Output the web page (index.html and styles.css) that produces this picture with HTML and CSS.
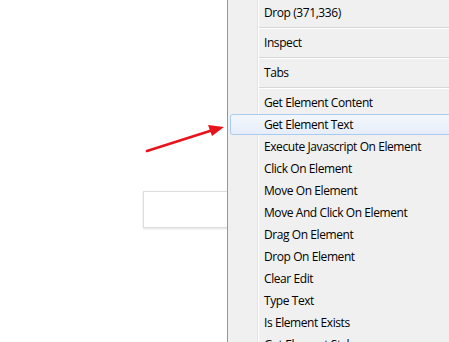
FILE: index.html
```html
<!DOCTYPE html>
<html>
<head>
<meta charset="utf-8">
<link rel="stylesheet" href="styles.css">
</head>
<body>
<div class="page">
  <div class="input-box"></div>
  <svg class="arrow" width="90" height="40" viewBox="0 0 90 40">
    <line x1="2" y1="35" x2="68" y2="14" stroke="#e8141c" stroke-width="2.6" stroke-linecap="round"/>
    <polygon points="79,11 63,9 67,20" fill="#e8141c"/>
  </svg>
  <div class="menu">
    <div class="item">Drop (371,336)</div>
    <div class="sep"></div>
    <div class="item">Inspect</div>
    <div class="sep"></div>
    <div class="item">Tabs</div>
    <div class="sep"></div>
    <div class="item">Get Element Content</div>
    <div class="item active">Get Element Text</div>
    <div class="item">Execute Javascript On Element</div>
    <div class="item">Click On Element</div>
    <div class="item">Move On Element</div>
    <div class="item">Move And Click On Element</div>
    <div class="item">Drag On Element</div>
    <div class="item">Drop On Element</div>
    <div class="item">Clear Edit</div>
    <div class="item">Type Text</div>
    <div class="item">Is Element Exists</div>
    <div class="item">Get Element Style</div>
  </div>
</div>
</body>
</html>
```

FILE: styles.css
```css
html, body {
  margin: 0;
  padding: 0;
  background: #fff;
  overflow: hidden;
}
.page {
  position: relative;
  width: 449px;
  height: 342px;
  overflow: hidden;
}
.input-box {
  position: absolute;
  left: 143px;
  top: 191px;
  width: 120px;
  height: 35px;
  border: 1px solid #dedede;
  background: #fff;
  box-shadow: 0 1px 2px rgba(0,0,0,0.12);
}
.arrow {
  position: absolute;
  left: 145px;
  top: 116px;
}
.menu {
  position: absolute;
  left: 227px;
  top: 0;
  width: 240px;
  height: 380px;
  background: #f0f0f0;
  border-left: 1px solid #979797;
  padding-top: 2px;
  font-family: "Open Sans", "Liberation Sans", sans-serif;
  font-size: 12px;
  color: #000;
  box-sizing: border-box;
  background-image: linear-gradient(to right, transparent 29px, #e2e3e3 29px, #e2e3e3 30px, #fff 30px, #fff 31px, transparent 31px);
}
.item {
  height: 22px;
  line-height: 22px;
  padding-left: 34px;
  margin-left: 2px;
  letter-spacing: -0.42px;
  white-space: nowrap;
  box-sizing: border-box;
}
.item.active {
  height: 21px;
  margin-bottom: 1px;
  line-height: 20px;
  padding-left: 33px;
  border: 1px solid #a9cbf2;
  border-radius: 3px;
  background: linear-gradient(to bottom, #f3f7fc, #e6eefa);
}
.sep {
  height: 8px;
  margin-left: 31px;
  background: linear-gradient(to bottom, transparent 3px, #d7d7d7 3px, #d7d7d7 4px, #fff 4px, #fff 5px, transparent 5px);
}
```
